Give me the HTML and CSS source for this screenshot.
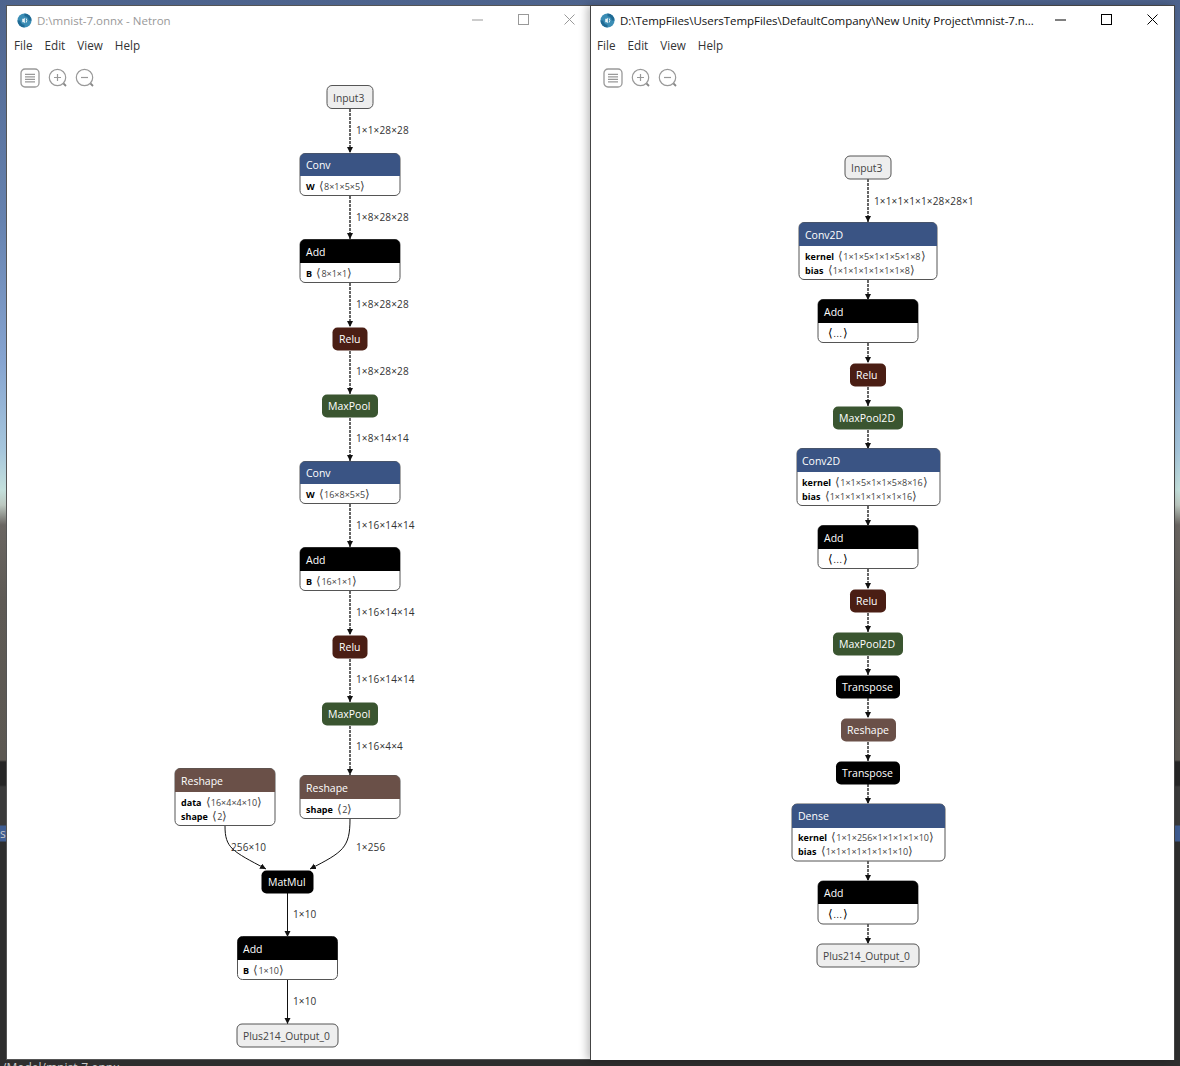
FILE: index.html
```html
<!DOCTYPE html>
<html>
<head>
  <meta charset="UTF-8">
  <title>Netron</title>
  <link rel="stylesheet" href="styles.css">
</head>
<body>
  <svg class="defs" width="0" height="0">
    <defs>
      <marker id="arrow" markerWidth="7" markerHeight="7" refX="6" refY="3" orient="auto" markerUnits="userSpaceOnUse">
        <path d="M0 0L6 3L0 6Z" fill="#111"/>
      </marker>
      <symbol id="logo" viewBox="0 0 16 16">
        <circle cx="8" cy="8" r="7.5" fill="#3b8db5"/>
        <path d="M8 .5A7.5 7.5 0 0 1 15.5 8H12.5A4.5 4.5 0 0 0 8 3.5Z" fill="#1f6a94"/>
        <path d="M8 15.5A7.5 7.5 0 0 1 .5 8H3.5A4.5 4.5 0 0 0 8 12.5Z" fill="#1f6a94"/>
        <path d="M5.6 6.2H7.2L8.4 5V11L7.2 9.8H5.6Z" fill="#eaf4f8"/>
        <path d="M9.7 5.8Q11.2 8 9.7 10.2" fill="none" stroke="#eaf4f8" stroke-width="1"/>
      </symbol>
      <symbol id="ico-menu" viewBox="0 0 20 20">
        <rect x="1" y="1" width="18" height="18" rx="4" fill="none" stroke="#999" stroke-width="1.3"/>
        <path d="M5 6.3H15M5 8.8H15M5 11.3H15M5 13.8H15" stroke="#999" stroke-width="1.2"/>
      </symbol>
      <symbol id="ico-in" viewBox="0 0 20 20">
        <circle cx="9.5" cy="9.5" r="8.2" fill="none" stroke="#999" stroke-width="1.2"/>
        <path d="M6 9.5H13M9.5 6V13" stroke="#999" stroke-width="1.2"/>
        <path d="M15.5 15.5L18 18" stroke="#888" stroke-width="1.8"/>
      </symbol>
      <symbol id="ico-out" viewBox="0 0 20 20">
        <circle cx="9.5" cy="9.5" r="8.2" fill="none" stroke="#999" stroke-width="1.2"/>
        <path d="M6 9.5H13" stroke="#999" stroke-width="1.2"/>
        <path d="M15.5 15.5L18 18" stroke="#888" stroke-width="1.8"/>
      </symbol>
    </defs>
  </svg>

  <span class="behind behind-tab">s</span>
  <span class="behind behind-path">/Model/mnist-7.onnx</span>

  <div class="desktop">
    <!-- left window, not focused -->
    <section class="window window-left">
      <header class="titlebar">
        <svg class="logo"><use href="#logo"/></svg>
        <span class="title">D:\mnist-7.onnx - Netron</span>
        <div class="controls">
          <svg class="ctl" viewBox="0 0 12 12"><path d="M0 6H11"/></svg>
          <svg class="ctl" viewBox="0 0 12 12"><rect x=".5" y=".5" width="10" height="10"/></svg>
          <svg class="ctl" viewBox="0 0 12 12"><path d="M.5 .5L10.5 10.5M10.5 .5L.5 10.5"/></svg>
        </div>
      </header>
      <nav class="menubar"><span>File</span><span>Edit</span><span>View</span><span>Help</span></nav>
      <div class="canvas">
        <div class="toolbar">
          <svg class="tool"><use href="#ico-menu"/></svg>
          <svg class="tool"><use href="#ico-in"/></svg>
          <svg class="tool"><use href="#ico-out"/></svg>
        </div>
        <svg class="graph" viewBox="7 58 583 1001">
          <g class="edges thick">
            <path d="M350 109V153" marker-end="url(#arrow)"/>
            <path d="M350 196V239" marker-end="url(#arrow)"/>
            <path d="M350 283V327" marker-end="url(#arrow)"/>
            <path d="M350 351V394" marker-end="url(#arrow)"/>
            <path d="M350 418V461" marker-end="url(#arrow)"/>
            <path d="M350 504V547" marker-end="url(#arrow)"/>
            <path d="M350 591V635" marker-end="url(#arrow)"/>
            <path d="M350 659V702" marker-end="url(#arrow)"/>
            <path d="M350 726V775" marker-end="url(#arrow)"/>
          </g>
          <g class="edges">
            <path d="M225 826C225 848 232 851 266 869" marker-end="url(#arrow)"/>
            <path d="M350 819C350 848 343 852 310 869" marker-end="url(#arrow)"/>
            <path d="M287.5 893V937" marker-end="url(#arrow)"/>
            <path d="M287.5 980V1024" marker-end="url(#arrow)"/>
          </g>
          <g class="labels">
            <text x="356" y="134">1×1×28×28</text>
            <text x="356" y="221">1×8×28×28</text>
            <text x="356" y="308">1×8×28×28</text>
            <text x="356" y="375">1×8×28×28</text>
            <text x="356" y="442">1×8×14×14</text>
            <text x="356" y="529">1×16×14×14</text>
            <text x="356" y="616">1×16×14×14</text>
            <text x="356" y="683">1×16×14×14</text>
            <text x="356" y="750">1×16×4×4</text>
            <text x="231" y="851">256×10</text>
            <text x="356" y="851">1×256</text>
            <text x="293" y="918">1×10</text>
            <text x="293" y="1005">1×10</text>
          </g>

          <rect class="io" x="327" y="85.5" width="46" height="23" rx="5"/>
          <text class="io-text" x="333" y="102">Input3</text>

          <rect class="body" x="300" y="153.5" width="100" height="42" rx="5"/>
          <path class="head-layer" d="M300 176V158.5a5 5 0 0 1 5-5h90a5 5 0 0 1 5 5V176Z"/>
          <text class="head-text" x="306" y="169">Conv</text>
          <text class="attr" x="306" y="190"><tspan class="attr-name">W</tspan> <tspan class="br">⟨</tspan>8×1×5×5<tspan class="br">⟩</tspan></text>

          <rect class="body" x="300" y="239.5" width="100" height="43" rx="5"/>
          <path class="head-black" d="M300 263V244.5a5 5 0 0 1 5-5h90a5 5 0 0 1 5 5V263Z"/>
          <text class="head-text" x="306" y="256">Add</text>
          <text class="attr" x="306" y="277"><tspan class="attr-name">B</tspan> <tspan class="br">⟨</tspan>8×1×1<tspan class="br">⟩</tspan></text>

          <rect class="head-relu" x="332.5" y="327.5" width="35" height="23" rx="5"/>
          <text class="head-text" x="339" y="343">Relu</text>

          <rect class="head-pool" x="322" y="394.5" width="56" height="23" rx="5"/>
          <text class="head-text" x="328" y="410">MaxPool</text>

          <rect class="body" x="300" y="461.5" width="100" height="42" rx="5"/>
          <path class="head-layer" d="M300 484V466.5a5 5 0 0 1 5-5h90a5 5 0 0 1 5 5V484Z"/>
          <text class="head-text" x="306" y="477">Conv</text>
          <text class="attr" x="306" y="498"><tspan class="attr-name">W</tspan> <tspan class="br">⟨</tspan>16×8×5×5<tspan class="br">⟩</tspan></text>

          <rect class="body" x="300" y="547.5" width="100" height="43" rx="5"/>
          <path class="head-black" d="M300 571V552.5a5 5 0 0 1 5-5h90a5 5 0 0 1 5 5V571Z"/>
          <text class="head-text" x="306" y="564">Add</text>
          <text class="attr" x="306" y="585"><tspan class="attr-name">B</tspan> <tspan class="br">⟨</tspan>16×1×1<tspan class="br">⟩</tspan></text>

          <rect class="head-relu" x="332.5" y="635.5" width="35" height="23" rx="5"/>
          <text class="head-text" x="339" y="651">Relu</text>

          <rect class="head-pool" x="322" y="702.5" width="56" height="23" rx="5"/>
          <text class="head-text" x="328" y="718">MaxPool</text>

          <rect class="body" x="175" y="768.5" width="100" height="57" rx="5"/>
          <path class="head-shape" d="M175 792V773.5a5 5 0 0 1 5-5h90a5 5 0 0 1 5 5V792Z"/>
          <text class="head-text" x="181" y="785">Reshape</text>
          <text class="attr" x="181" y="806"><tspan class="attr-name">data</tspan> <tspan class="br">⟨</tspan>16×4×4×10<tspan class="br">⟩</tspan></text>
          <text class="attr" x="181" y="820"><tspan class="attr-name">shape</tspan> <tspan class="br">⟨</tspan>2<tspan class="br">⟩</tspan></text>

          <rect class="body" x="300" y="775.5" width="100" height="43" rx="5"/>
          <path class="head-shape" d="M300 799V780.5a5 5 0 0 1 5-5h90a5 5 0 0 1 5 5V799Z"/>
          <text class="head-text" x="306" y="792">Reshape</text>
          <text class="attr" x="306" y="813"><tspan class="attr-name">shape</tspan> <tspan class="br">⟨</tspan>2<tspan class="br">⟩</tspan></text>

          <rect class="head-black" x="261.5" y="870.5" width="52" height="23" rx="5"/>
          <text class="head-text" x="268" y="886">MatMul</text>

          <rect class="body" x="237.5" y="936.5" width="100" height="43" rx="5"/>
          <path class="head-black" d="M237.5 960V941.5a5 5 0 0 1 5-5h90a5 5 0 0 1 5 5V960Z"/>
          <text class="head-text" x="243" y="953">Add</text>
          <text class="attr" x="243" y="974"><tspan class="attr-name">B</tspan> <tspan class="br">⟨</tspan>1×10<tspan class="br">⟩</tspan></text>

          <rect class="io" x="237" y="1024" width="101" height="23" rx="5"/>
          <text class="io-text" x="243" y="1040">Plus214_Output_0</text>
        </svg>
      </div>
    </section>

    <!-- right window, focused -->
    <section class="window window-right">
      <header class="titlebar">
        <svg class="logo"><use href="#logo"/></svg>
        <span class="title">D:\TempFiles\UsersTempFiles\DefaultCompany\New Unity Project\mnist-7.n...</span>
        <div class="controls">
          <svg class="ctl" viewBox="0 0 12 12"><path d="M0 6H11"/></svg>
          <svg class="ctl" viewBox="0 0 12 12"><rect x=".5" y=".5" width="10" height="10"/></svg>
          <svg class="ctl" viewBox="0 0 12 12"><path d="M.5 .5L10.5 10.5M10.5 .5L.5 10.5"/></svg>
        </div>
      </header>
      <nav class="menubar"><span>File</span><span>Edit</span><span>View</span><span>Help</span></nav>
      <div class="canvas">
        <div class="toolbar">
          <svg class="tool"><use href="#ico-menu"/></svg>
          <svg class="tool"><use href="#ico-in"/></svg>
          <svg class="tool"><use href="#ico-out"/></svg>
        </div>
        <svg class="graph" viewBox="591 58 583 1001">
          <g class="edges thick">
            <path d="M868 179V222" marker-end="url(#arrow)"/>
            <path d="M868 280V300" marker-end="url(#arrow)"/>
            <path d="M868 343V363" marker-end="url(#arrow)"/>
            <path d="M868 387V406" marker-end="url(#arrow)"/>
            <path d="M868 430V449" marker-end="url(#arrow)"/>
            <path d="M868 506V526" marker-end="url(#arrow)"/>
            <path d="M868 569V589" marker-end="url(#arrow)"/>
            <path d="M868 613V632" marker-end="url(#arrow)"/>
            <path d="M868 656V675" marker-end="url(#arrow)"/>
            <path d="M868 698V718" marker-end="url(#arrow)"/>
            <path d="M868 742V761" marker-end="url(#arrow)"/>
            <path d="M868 784V804" marker-end="url(#arrow)"/>
            <path d="M868 861V881" marker-end="url(#arrow)"/>
            <path d="M868 924V944" marker-end="url(#arrow)"/>
          </g>
          <g class="labels">
            <text x="874" y="205">1×1×1×1×1×28×28×1</text>
          </g>

          <rect class="io" x="845" y="156" width="46" height="23" rx="5"/>
          <text class="io-text" x="851" y="172">Input3</text>

          <rect class="body" x="799" y="222.5" width="138" height="57" rx="5"/>
          <path class="head-layer" d="M799 246V227.5a5 5 0 0 1 5-5h128a5 5 0 0 1 5 5V246Z"/>
          <text class="head-text" x="805" y="239">Conv2D</text>
          <text class="attr" x="805" y="260"><tspan class="attr-name">kernel</tspan> <tspan class="br">⟨</tspan>1×1×5×1×1×5×1×8<tspan class="br">⟩</tspan></text>
          <text class="attr" x="805" y="274"><tspan class="attr-name">bias</tspan> <tspan class="br">⟨</tspan>1×1×1×1×1×1×1×8<tspan class="br">⟩</tspan></text>

          <rect class="body" x="818" y="299.5" width="100" height="43" rx="5"/>
          <path class="head-black" d="M818 323V304.5a5 5 0 0 1 5-5h90a5 5 0 0 1 5 5V323Z"/>
          <text class="head-text" x="824" y="316">Add</text>
          <text class="attr attr-more" x="828" y="337"><tspan class="br">⟨</tspan>...<tspan class="br">⟩</tspan></text>

          <rect class="head-relu" x="850" y="363.5" width="36" height="23" rx="5"/>
          <text class="head-text" x="856" y="379">Relu</text>

          <rect class="head-pool" x="833" y="406.5" width="70" height="23" rx="5"/>
          <text class="head-text" x="839" y="422">MaxPool2D</text>

          <rect class="body" x="797" y="448.5" width="143" height="57" rx="5"/>
          <path class="head-layer" d="M797 472V453.5a5 5 0 0 1 5-5h133a5 5 0 0 1 5 5V472Z"/>
          <text class="head-text" x="802" y="465">Conv2D</text>
          <text class="attr" x="802" y="486"><tspan class="attr-name">kernel</tspan> <tspan class="br">⟨</tspan>1×1×5×1×1×5×8×16<tspan class="br">⟩</tspan></text>
          <text class="attr" x="802" y="500"><tspan class="attr-name">bias</tspan> <tspan class="br">⟨</tspan>1×1×1×1×1×1×1×16<tspan class="br">⟩</tspan></text>

          <rect class="body" x="818" y="525.5" width="100" height="43" rx="5"/>
          <path class="head-black" d="M818 549V530.5a5 5 0 0 1 5-5h90a5 5 0 0 1 5 5V549Z"/>
          <text class="head-text" x="824" y="542">Add</text>
          <text class="attr attr-more" x="828" y="563"><tspan class="br">⟨</tspan>...<tspan class="br">⟩</tspan></text>

          <rect class="head-relu" x="850" y="589.5" width="36" height="23" rx="5"/>
          <text class="head-text" x="856" y="605">Relu</text>

          <rect class="head-pool" x="833" y="632.5" width="70" height="23" rx="5"/>
          <text class="head-text" x="839" y="648">MaxPool2D</text>

          <rect class="head-black" x="836" y="675.5" width="64" height="23" rx="5"/>
          <text class="head-text" x="842" y="691">Transpose</text>

          <rect class="head-shape" x="841" y="718.5" width="55" height="23" rx="5"/>
          <text class="head-text" x="847" y="734">Reshape</text>

          <rect class="head-black" x="836" y="761.5" width="64" height="23" rx="5"/>
          <text class="head-text" x="842" y="777">Transpose</text>

          <rect class="body" x="792" y="804" width="153" height="57" rx="5"/>
          <path class="head-layer" d="M792 828V809a5 5 0 0 1 5-5h143a5 5 0 0 1 5 5V828Z"/>
          <text class="head-text" x="798" y="820">Dense</text>
          <text class="attr" x="798" y="841"><tspan class="attr-name">kernel</tspan> <tspan class="br">⟨</tspan>1×1×256×1×1×1×1×10<tspan class="br">⟩</tspan></text>
          <text class="attr" x="798" y="855"><tspan class="attr-name">bias</tspan> <tspan class="br">⟨</tspan>1×1×1×1×1×1×1×10<tspan class="br">⟩</tspan></text>

          <rect class="body" x="818" y="881" width="100" height="43" rx="5"/>
          <path class="head-black" d="M818 904V886a5 5 0 0 1 5-5h90a5 5 0 0 1 5 5V904Z"/>
          <text class="head-text" x="824" y="897">Add</text>
          <text class="attr attr-more" x="828" y="918"><tspan class="br">⟨</tspan>...<tspan class="br">⟩</tspan></text>

          <rect class="io" x="817" y="944" width="102" height="23" rx="5"/>
          <text class="io-text" x="823" y="960">Plus214_Output_0</text>
        </svg>
      </div>
    </section>
  </div>
</body>
</html>
```

FILE: styles.css
```css
html, body {
  margin: 0;
  height: 100%;
  overflow: hidden;
}

body {
  position: relative;
  font-family: "Open Sans", "Noto Sans", sans-serif;
  background: linear-gradient(to bottom,
    #4d638d 0,
    #6682af 220px,
    #86a4d0 360px,
    #a6c6dc 450px,
    #c4e0dc 490px,
    #bcc8c0 505px,
    #6a6662 525px,
    #5e5a55 600px,
    #5c5852 760px,
    #262626 762px,
    #262626 785px,
    #3a3a3a 787px,
    #3a3a3a 825px,
    #3f5d92 826px,
    #3f5d92 841px,
    #2e2e2e 842px,
    #2e2e2e 100%);
}

.defs {
  position: absolute;
}

.behind {
  position: absolute;
  font-size: 12px;
  color: #c8c8c8;
}

.behind-tab {
  left: 0;
  top: 825px;
}

.behind-path {
  left: 2px;
  top: 1059px;
}

.desktop {
  display: flex;
  padding: 5px 0 0 6px;
}

.window {
  display: flex;
  flex-direction: column;
  height: 1055px;
  box-sizing: border-box;
  background: #fff;
  border: 1px solid #555;
  border-right: 0;
}

.window-left {
  width: 584px;
}

.window-right {
  width: 585px;
  border-right: 1px solid #aaa;
  border-bottom: 0;
  border-color: #444;
  box-shadow: -3px 0 8px rgba(0, 0, 0, .25);
  z-index: 1;
}

.titlebar {
  display: flex;
  align-items: center;
  height: 28px;
  padding-left: 10px;
}

.window-right .titlebar {
  padding-left: 9px;
}

.logo {
  width: 15px;
  height: 15px;
  margin-right: 5px;
  flex: none;
}

.title {
  font-size: 11.5px;
  color: #999;
  white-space: nowrap;
}

.window-right .title {
  color: #111;
  letter-spacing: -.04px;
}

.controls {
  margin-left: auto;
  display: flex;
  gap: 34px;
  padding-right: 14px;
}

.window-right .controls {
  padding-right: 15px;
}

.ctl {
  width: 12px;
  height: 12px;
  fill: none;
  stroke: #999;
  stroke-width: 1;
}

.window-right .ctl {
  stroke: #000;
}

.menubar {
  display: flex;
  gap: 12px;
  height: 22px;
  padding-bottom: 2px;
  align-items: center;
  padding-left: 7px;
  font-size: 11.7px;
  color: #333;
}

.window-right .menubar {
  padding-left: 6px;
}

.canvas {
  position: relative;
  flex: 1;
}

.toolbar {
  position: absolute;
  left: 13px;
  top: 10px;
  display: flex;
  gap: 7.5px;
}

.window-right .toolbar {
  left: 12px;
}

.tool {
  width: 20px;
  height: 20px;
}

.graph {
  display: block;
  width: 583px;
  height: 1001px;
}

.edges path {
  fill: none;
  stroke: #111;
  stroke-width: 1;
}

.edges.thick path {
  stroke: #666;
  stroke-width: 2;
  stroke-dasharray: 3 1;
}

.labels text {
  font-size: 10px;
  letter-spacing: .15px;
  fill: #333;
}

.io {
  fill: #eee;
  stroke: #555;
}

.io-text {
  font-size: 10.3px;
  fill: #444;
}

.body {
  fill: #fff;
  stroke: #555;
}

.head-layer {
  fill: #3a5484;
}

.head-black {
  fill: #000;
}

.head-relu {
  fill: #4a1e14;
}

.head-pool {
  fill: #3a5530;
}

.head-shape {
  fill: #6a5048;
}

.head-text {
  font-size: 10.5px;
  fill: #fff;
}

.attr {
  font-size: 9px;
  word-spacing: 2px;
  fill: #444;
}

.attr-more {
  fill: #000;
  letter-spacing: .6px;
}

.br {
  font-size: 12px;
}

.attr-name {
  font-weight: 700;
  fill: #000;
}
```
